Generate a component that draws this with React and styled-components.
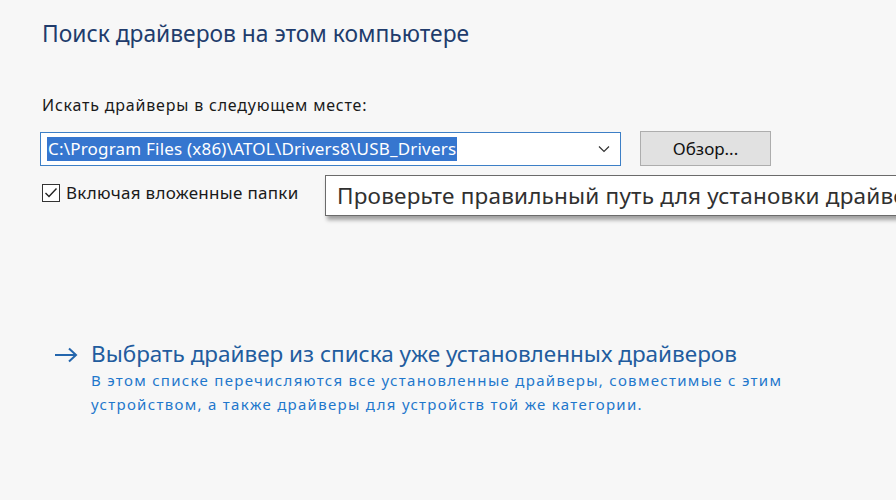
import React from 'react'
import styled, { createGlobalStyle } from 'styled-components'

const Global = createGlobalStyle`
  html, body {
    margin:0;
    padding:0;
    background:#f7f7f7;
    overflow:hidden;
  }
  body{
    font-family:"Noto Sans", "Open Sans", sans-serif;
  }
`

const Page = styled.div`
  position:relative;
  width:896px;
  height:500px;
  box-sizing:border-box;
  padding:20px 0 0 42px;
  display:flex;
  flex-direction:column;
  overflow:hidden;
`

const Title = styled.h1`
  margin:0;
  font-size:22.8px;
  font-weight:400;
  line-height:28px;
  color:#213c6c;
`

const Label = styled.div`
  margin-top:47px;
  font-size:16px;
  letter-spacing:0.8px;
  line-height:20px;
  color:#1a1a1a;
`

const Row = styled.div`
  display:flex;
  align-items:center;
  gap:19px;
  margin-top:16px;
  margin-left:-2px;
`

const Combo = styled.div`
  width:581px;
  height:34px;
  box-sizing:border-box;
  border:1px solid #3d7fc6;
  background:#fff;
  display:flex;
  align-items:center;
  padding:0 10px 0 6px;
`

const Selected = styled.span`
  background:#3676cf;
  color:#fff;
  font-size:17px;
  letter-spacing:0.2px;
  line-height:24px;
  padding:0 1px;
  white-space:nowrap;
`

const Chevron = styled.svg`
  margin-left:auto;
  width:12px;
  height:8px;
`

const Browse = styled.button`
  width:131px;
  height:35px;
  background:#e1e1e1;
  border:1px solid #adadad;
  font-family:inherit;
  font-size:17px;
  color:#111;
  padding:0;
`

const CheckRow = styled.label`
  display:flex;
  align-items:center;
  gap:6px;
  margin-top:15px;
  font-size:17px;
  letter-spacing:0.3px;
  color:#1a1a1a;
`

const Box = styled.span`
  width:18px;
  height:18px;
  box-sizing:border-box;
  border:1px solid #333;
  background:#fff;
  display:flex;
  align-items:center;
  justify-content:center;
`

const Tip = styled.div`
  position:absolute;
  left:325px;
  top:175px;
  width:620px;
  height:41px;
  box-sizing:border-box;
  border:1px solid #6b6b6b;
  background:#fff;
  box-shadow:2px 4px 4px rgba(0,0,0,0.35);
  padding-left:11px;
  display:flex;
  align-items:center;
  font-size:22.5px;
  letter-spacing:0.2px;
  color:#303030;
  white-space:nowrap;
`

const LinkBlock = styled.div`
  margin-top:136px;
  margin-left:12px;
  display:grid;
  grid-template-columns:24px auto;
  column-gap:13px;
`

const Arrow = styled.svg`
  width:24px;
  height:16px;
  margin-top:7px;
`

const LinkTitle = styled.div`
  font-size:22.5px;
  line-height:28px;
  color:#225c9e;
  white-space:nowrap;
`

const LinkDesc = styled.div`
  grid-column:2;
  font-size:15px;
  letter-spacing:1.3px;
  line-height:24px;
  color:#1f77cc;
  white-space:nowrap;
`

export default function App() {
  return (
    <>
      <Global />
      <Page>
        <Title>Поиск драйверов на этом компьютере</Title>
        <Label>Искать драйверы в следующем месте:</Label>
        <Row>
          <Combo>
            <Selected>C:\Program Files (x86)\ATOL\Drivers8\USB_Drivers</Selected>
            <Chevron viewBox="0 0 12 8">
              <path d="M1 1.5 L6 6.5 L11 1.5" fill="none" stroke="#333" strokeWidth="1.2" />
            </Chevron>
          </Combo>
          <Browse>Обзор...</Browse>
        </Row>
        <CheckRow>
          <Box>
            <svg width="14" height="12" viewBox="0 0 14 12">
              <path d="M1.5 6 L5 9.5 L12.5 1.5" fill="none" stroke="#222" strokeWidth="1.4" />
            </svg>
          </Box>
          Включая вложенные папки
        </CheckRow>
        <Tip>Проверьте правильный путь для установки драйвера</Tip>
        <LinkBlock>
          <Arrow viewBox="0 0 24 16">
            <path d="M1 8 H22 M15 1.5 L22 8 L15 14.5" fill="none" stroke="#2466ad" strokeWidth="2" />
          </Arrow>
          <LinkTitle>Выбрать драйвер из списка уже установленных драйверов</LinkTitle>
          <LinkDesc>
            В этом списке перечисляются все установленные драйверы, совместимые с этим<br />
            устройством, а также драйверы для устройств той же категории.
          </LinkDesc>
        </LinkBlock>
      </Page>
    </>
  )
}
